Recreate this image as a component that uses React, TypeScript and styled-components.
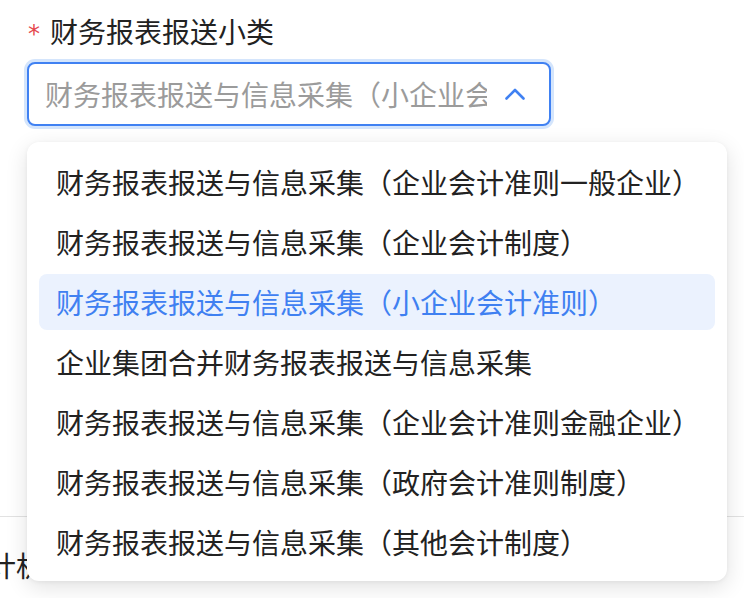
import React from 'react'
import styled, { createGlobalStyle } from 'styled-components'

const GlobalStyle = createGlobalStyle`
    html, body {
        margin: 0;
        padding: 0;
        background: #ffffff;
        overflow: hidden;
    }
    body {
        font-family: "Noto Sans CJK SC", "Noto Sans", sans-serif;
        color: #222222;
    }
`;

const Page = styled.div`
    width: 744px;
    height: 598px;
    overflow: hidden;
    position: relative;
`;

const FormItem = styled.section`
    padding: 11px 0 0 27px;
`;

const Label = styled.div`
    display: flex;
    align-items: center;
    height: 40px;
    font-size: 28px;
    line-height: 40px;
    color: #222222;
`;

const Required = styled.span`
    color: #e5484d;
    font-family: "DejaVu Sans", sans-serif;
    font-size: 24px;
    width: 22px;
    padding-left: 1px;
    position: relative;
    top: 3px;
`;

const SelectWrap = styled.div`
    position: relative;
    margin-top: 11px;
    width: 524px;
`;

const SelectBox = styled.div`
    box-sizing: border-box;
    height: 64px;
    border: 2px solid #4081f2;
    border-radius: 8px;
    box-shadow: 0 0 0 3px #d4e5fc;
    display: flex;
    align-items: center;
    padding: 0 24px 0 16px;
    gap: 18px;
    background: #fff;
`;

const Placeholder = styled.div`
    flex: 1;
    overflow: hidden;
    white-space: nowrap;
    font-size: 28px;
    color: #9b9b9b;
`;

const Chevron = styled.svg`
    flex: none;
    width: 20px;
    height: 12px;
`;

const Dropdown = styled.ul`
    position: absolute;
    left: 0;
    top: calc(100% + 16px);
    width: 700px;
    box-sizing: border-box;
    margin: 0;
    padding: 12px 12px 11px;
    list-style: none;
    background: #fff;
    border-radius: 12px;
    box-shadow: 0 6px 22px rgba(0, 0, 0, 0.12), 0 1px 4px rgba(0, 0, 0, 0.05);
    display: flex;
    flex-direction: column;
    gap: 4px;
    z-index: 10;
`;

type OptionProps = {
    $active?: boolean;
}
const Option = styled.li<OptionProps>`
    height: 56px;
    line-height: 56px;
    padding: 0 17px;
    border-radius: 8px;
    font-size: 28px;
    white-space: nowrap;
    color: ${props => props.$active ? "#3f80f1" : "#222222"};
    background: ${props => props.$active ? "#ebf2fe" : "transparent"};
`;

const NextSection = styled.section`
    margin-top: 390px;
    border-top: 1px solid #e2e2e2;
    padding-top: 28px;
`;

const NextLabel = styled.div`
    font-size: 28px;
    line-height: 40px;
    margin-left: -12px;
    white-space: nowrap;
    color: #222222;
`;

const options = [
    "财务报表报送与信息采集（企业会计准则一般企业）",
    "财务报表报送与信息采集（企业会计制度）",
    "财务报表报送与信息采集（小企业会计准则）",
    "企业集团合并财务报表报送与信息采集",
    "财务报表报送与信息采集（企业会计准则金融企业）",
    "财务报表报送与信息采集（政府会计准则制度）",
    "财务报表报送与信息采集（其他会计制度）",
];

function App() {
    const selected = 2;

    return (
        <Page>
            <GlobalStyle />
            <FormItem>
                <Label>
                    <Required>*</Required>
                    财务报表报送小类
                </Label>
                <SelectWrap>
                    <SelectBox>
                        <Placeholder>财务报表报送与信息采集（小企业会计准则）</Placeholder>
                        <Chevron viewBox="0 0 20 12">
                            <polyline points="1.5,10.5 10,2 18.5,10.5" fill="none" stroke="#4081f2" strokeWidth="2.6" strokeLinecap="round" strokeLinejoin="round" />
                        </Chevron>
                    </SelectBox>
                    <Dropdown>
                        {
                            options.map((text, index) => (
                                <Option key={index} $active={index === selected}>{text}</Option>
                            ))
                        }
                    </Dropdown>
                </SelectWrap>
            </FormItem>
            <NextSection>
                <NextLabel>计机构</NextLabel>
            </NextSection>
        </Page>
    )
}

export default App
